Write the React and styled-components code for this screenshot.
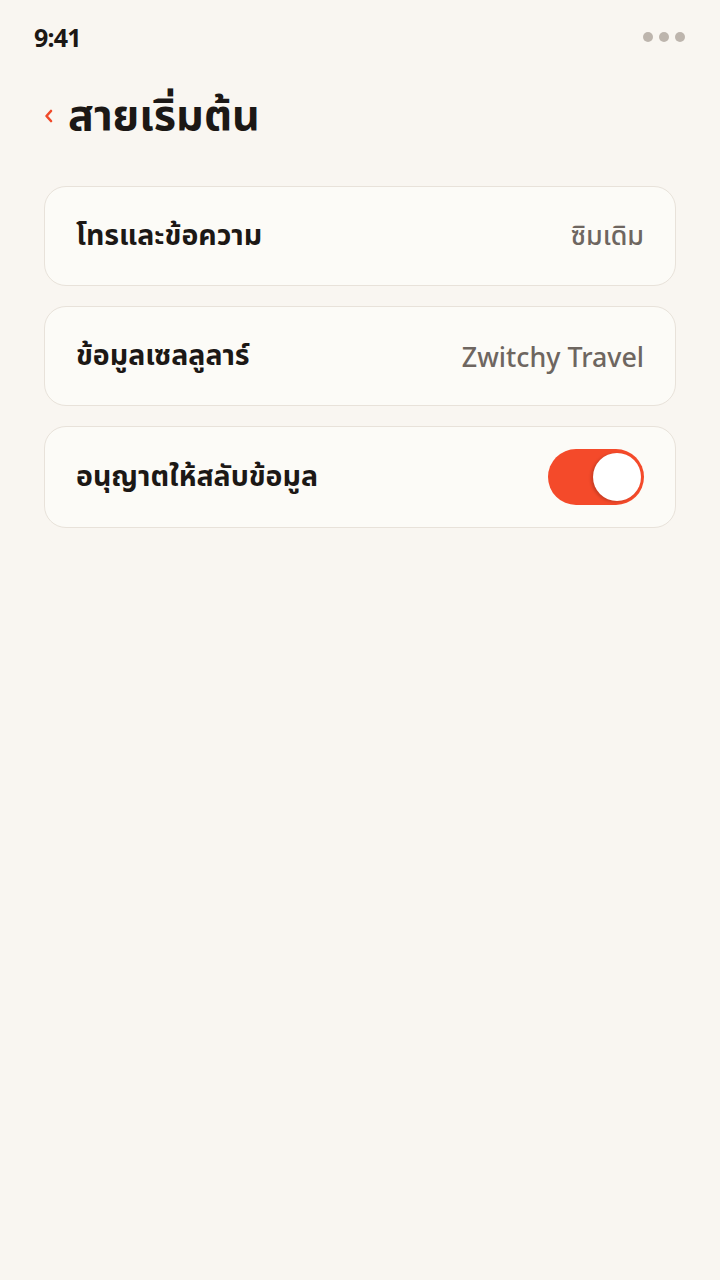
import React from 'react';
import styled, { createGlobalStyle } from 'styled-components';

const Global = createGlobalStyle`
  html, body {
    margin: 0;
    padding: 0;
    background: #f9f6f1;
  }
  body {
    font-family: "Noto Sans", "Noto Sans Thai", "DejaVu Sans", sans-serif;
    color: #1c1815;
  }
`;

const Screen = styled.div`
  width: 720px;
  min-height: 1280px;
  background: #f9f6f1;
  box-sizing: border-box;
`;

const StatusBar = styled.div`
  height: 74px;
  display: flex;
  align-items: center;
  justify-content: space-between;
  padding: 0 35px 0 34px;
  box-sizing: border-box;

  span {
    font-size: 25px;
    font-weight: 700;
    letter-spacing: -0.8px;
    color: #1c1815;
  }
`;

const Dots = styled.div`
  display: flex;
  gap: 6px;

  i {
    width: 10px;
    height: 10px;
    border-radius: 50%;
    background: #bdb5ad;
  }
`;

const Header = styled.header`
  display: flex;
  align-items: center;
  gap: 14px;
  padding: 0 44px;
  height: 84px;

  h1 {
    margin: 0;
    font-size: 43px;
    font-weight: 700;
    color: #1c1815;
  }
`;

const List = styled.div`
  display: flex;
  flex-direction: column;
  gap: 20px;
  padding: 28px 44px 0;
`;

const Card = styled.div`
  height: ${p => p.$tall ? 102 : 100}px;
  display: flex;
  align-items: center;
  justify-content: space-between;
  padding: 0 31px;
  background: #fcfbf7;
  border: 1px solid #e8e2da;
  border-radius: 22px;
  box-sizing: border-box;
`;

const Label = styled.span`
  font-size: 28.5px;
  font-weight: 700;
  color: #1c1815;
`;

const Value = styled.span`
  font-size: 26.8px;
  font-weight: 500;
  color: #6e6660;
`;

const Toggle = styled.div`
  width: 96px;
  height: 56px;
  border-radius: 28px;
  background: #f44a2a;
  display: flex;
  align-items: center;
  justify-content: ${p => p.$on ? 'flex-end' : 'flex-start'};
  padding: 0 3px;
  box-sizing: border-box;

  &::after {
    content: "";
    width: 48px;
    height: 48px;
    border-radius: 50%;
    background: #fff;
    box-shadow: -2px 1px 3px rgba(0, 0, 0, 0.18);
  }
`;

export default function App() {
  return (
    <Screen>
      <Global />
      <StatusBar>
        <span>9:41</span>
        <Dots><i /><i /><i /></Dots>
      </StatusBar>
      <Header>
        <svg width="10" height="14" viewBox="0 0 10 14">
          <path d="M7 2 L2.5 7 L7 12" fill="none" stroke="#f04a2a" strokeWidth="2.6" strokeLinecap="round" strokeLinejoin="round" />
        </svg>
        <h1>สายเริ่มต้น</h1>
      </Header>
      <List>
        <Card>
          <Label>โทรและข้อความ</Label>
          <Value>ซิมเดิม</Value>
        </Card>
        <Card>
          <Label>ข้อมูลเซลลูลาร์</Label>
          <Value>Zwitchy Travel</Value>
        </Card>
        <Card $tall>
          <Label>อนุญาตให้สลับข้อมูล</Label>
          <Toggle $on />
        </Card>
      </List>
    </Screen>
  );
}
